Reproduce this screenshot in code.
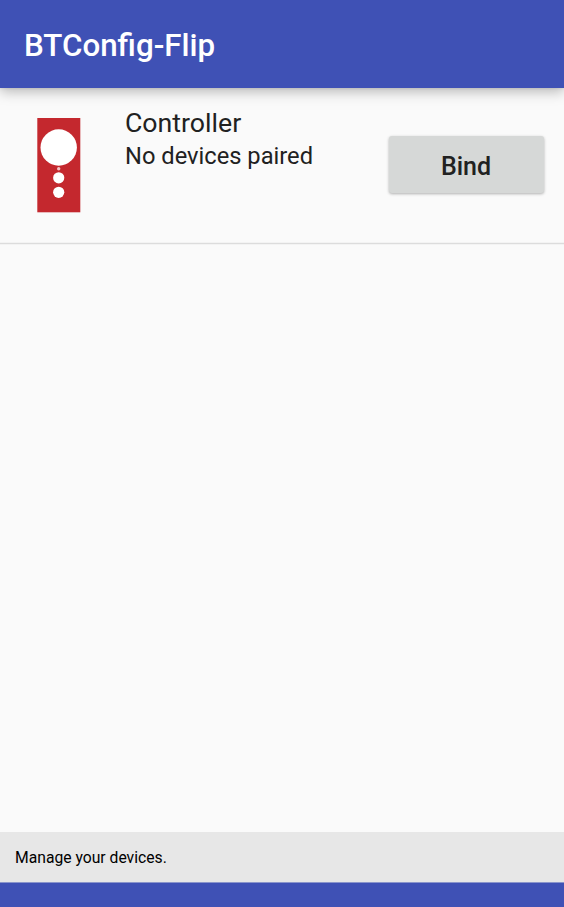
<div class="screen">
  <header>BTConfig-Flip</header>
  <main>
    <section class="device">
      <svg class="remote" width="44" height="95" viewBox="0 0 44 95" aria-hidden="true">
        <rect x="0.3" y="0" width="43" height="94.3" fill="#c4282e" />
        <circle cx="21.7" cy="29.5" r="18.2" fill="#fff" />
        <circle cx="21.7" cy="50.7" r="1.7" fill="#f3c4c6" />
        <circle cx="21.7" cy="59.8" r="5.6" fill="#fff" />
        <circle cx="21.7" cy="74.3" r="5.6" fill="#fff" />
      </svg>
      <div class="info">
        <div class="name">Controller</div>
        <div class="status">No devices paired</div>
      </div>
      <button>Bind</button>
    </section>
  </main>
  <footer>Manage your devices.</footer>
  <div class="nav"></div>
</div>

<style>
  .screen {
    width: 564px;
    height: 907px;
    display: flex;
    flex-direction: column;
    overflow: hidden;
    background: #fafafa;
    color: #212121;
    font-family: Roboto, sans-serif;
  }
  header {
    height: 88px;
    flex: none;
    box-sizing: border-box;
    padding: 1px 24px 0;
    line-height: 89px;
    background: #3f51b5;
    color: #fff;
    font-size: 31.3px;
    font-weight: 500;
    position: relative;
    box-shadow: 0 4px 12px rgba(0, 0, 0, 0.26), 0 0 3px rgba(0, 0, 0, 0.12);
  }
  main { flex: 1; }
  .device {
    height: 156px;
    box-sizing: border-box;
    display: flex;
    align-items: flex-start;
    padding: 0 20px 0 37px;
    border-bottom: 1px solid #dcdcdc;
    box-shadow: 0 1px 0 #f3f3f3, inset 0 -1px 0 #f3f3f3;
  }
  .remote { margin-top: 30px; flex: none; }
  .info { margin: 19px 0 0 44px; flex: 1; white-space: nowrap; }
  .name { font-size: 26.7px; line-height: 33px; }
  .status { font-size: 23.7px; line-height: 33px; }
  button {
    width: 155px;
    height: 57px;
    margin-top: 48px;
    padding: 3px 1px 0 0;
    border: 0;
    border-radius: 3px;
    background: #d6d8d7;
    color: #212121;
    font: 500 25px Roboto, sans-serif;
    box-shadow: 0 1px 3px rgba(0, 0, 0, 0.3);
  }
  footer {
    height: 50px;
    flex: none;
    box-sizing: border-box;
    padding: 1px 0 0 15px;
    line-height: 50px;
    background: #e7e7e7;
    color: #000;
    font-size: 15.7px;
  }
  .nav {
    height: 25px;
    flex: none;
    box-sizing: border-box;
    border-top: 1px solid #8a95cc;
    background: #3f51b5;
  }
</style>
